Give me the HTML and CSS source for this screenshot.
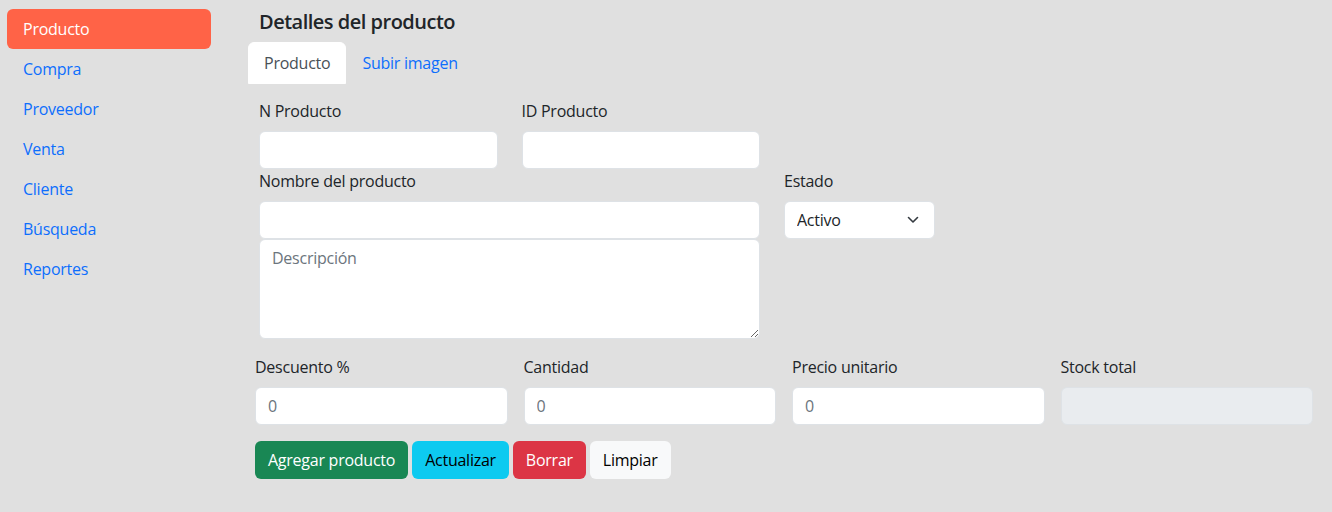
FILE: index.html
```html
<!DOCTYPE html>
<html lang="es">
<head>
<meta charset="utf-8">
<title>Detalles del producto</title>
<link rel="stylesheet" href="styles.css">
</head>
<body>
<div class="layout">
  <aside class="sidebar">
    <nav class="pills">
      <a class="pill active" href="#">Producto</a>
      <a class="pill" href="#">Compra</a>
      <a class="pill" href="#">Proveedor</a>
      <a class="pill" href="#">Venta</a>
      <a class="pill" href="#">Cliente</a>
      <a class="pill" href="#">Búsqueda</a>
      <a class="pill" href="#">Reportes</a>
    </nav>
  </aside>
  <main class="main">
    <h5 class="title">Detalles del producto</h5>
    <div class="tabs">
      <a class="tab active" href="#">Producto</a>
      <a class="tab" href="#">Subir imagen</a>
    </div>
    <form class="form">
      <div class="row">
        <div class="field w3">
          <label class="label">N Producto</label>
          <input class="control" type="text">
        </div>
        <div class="field w3">
          <label class="label">ID Producto</label>
          <input class="control" type="text">
        </div>
      </div>
      <div class="row">
        <div class="field w6">
          <label class="label">Nombre del producto</label>
          <input class="control" type="text">
          <textarea class="control area" placeholder="Descripción"></textarea>
        </div>
        <div class="field w2">
          <label class="label">Estado</label>
          <div class="select-wrap">
            <select class="control select">
              <option>Activo</option>
              <option>Inactivo</option>
            </select>
            <svg class="chev" width="12" height="8" viewBox="0 0 12 8"><path d="M1.5 1.5 6 6 10.5 1.5" fill="none" stroke="#343a40" stroke-width="1.6" stroke-linecap="round" stroke-linejoin="round"/></svg>
          </div>
        </div>
      </div>
      <div class="grid4">
        <div class="field">
          <label class="label">Descuento %</label>
          <input class="control" type="text" placeholder="0">
        </div>
        <div class="field">
          <label class="label">Cantidad</label>
          <input class="control" type="text" placeholder="0">
        </div>
        <div class="field">
          <label class="label">Precio unitario</label>
          <input class="control" type="text" placeholder="0">
        </div>
        <div class="field">
          <label class="label">Stock total</label>
          <input class="control" type="text" disabled>
        </div>
      </div>
      <div class="buttons">
        <button type="button" class="btn success">Agregar producto</button>
        <button type="button" class="btn info">Actualizar</button>
        <button type="button" class="btn danger">Borrar</button>
        <button type="button" class="btn light">Limpiar</button>
      </div>
    </form>
  </main>
</div>
</body>
</html>
```
FILE: styles.css
```css
* { box-sizing: border-box; }
html, body { margin: 0; padding: 0; }
body {
  background: #e0e0e0;
  font-family: "Open Sans", "Noto Sans", sans-serif;
  font-size: 16px;
  line-height: 24px;
  letter-spacing: -0.25px;
  color: #212529;
}
.layout { display: flex; align-items: flex-start; }
.sidebar { width: 247px; flex: none; padding: 9px 36px 0 7px; }
.pills { display: flex; flex-direction: column; }
.pill {
  display: block;
  padding: 8px 16px;
  color: #0d6efd;
  text-decoration: none;
  border-radius: 6px;
}
.pill.active { background: #ff6347; color: #fff; }
.main { width: 1074px; flex: none; padding-top: 10px; }
.title {
  margin: 0 0 8px 0;
  padding-left: 12px;
  font-size: 20px;
  line-height: 24px;
  font-weight: 600;
  letter-spacing: -0.5px;
}
.tabs { display: flex; padding-left: 1px; }
.tab {
  display: block;
  padding: 8px 15px;
  border: 1px solid transparent;
  border-radius: 6px 6px 0 0;
  color: #0d6efd;
  text-decoration: none;
}
.tab.active { background: #fff; border-color: #fff; color: #495057; }
.form { margin-top: 15px; }
.row { display: flex; gap: 24px; padding-left: 12px; }
.field { display: flex; flex-direction: column; }
.w3 { width: 238.5px; }
.w6 { width: 501px; }
.w2 { width: 151px; }
.label { display: block; margin-bottom: 8px; }
.control {
  display: block;
  width: 100%;
  height: 38px;
  padding: 6px 12px;
  font: inherit;
  letter-spacing: inherit;
  color: #212529;
  background: #fff;
  border: 1px solid #dee2e6;
  border-radius: 6px;
  outline: none;
}
.control::placeholder { color: #6c757d; }
.control:disabled { background: #e9ecef; }
.area { height: 100px; resize: vertical; }
.select-wrap { position: relative; }
.select { appearance: none; -webkit-appearance: none; padding-right: 36px; }
.chev { position: absolute; right: 16px; top: 15px; pointer-events: none; }
.grid4 {
  display: grid;
  grid-template-columns: repeat(4, 1fr);
  column-gap: 16px;
  padding: 0 8px;
  margin-top: 16px;
}
.buttons { display: flex; gap: 4px; padding-left: 8px; margin-top: 16px; }
.btn {
  font: inherit;
  letter-spacing: inherit;
  padding: 6px 12px;
  border: 1px solid transparent;
  border-radius: 6px;
  cursor: pointer;
}
.success { background: #198754; color: #fff; }
.info { background: #0dcaf0; color: #000; }
.danger { background: #dc3545; color: #fff; }
.light { background: #f8f9fa; color: #000; }
```
